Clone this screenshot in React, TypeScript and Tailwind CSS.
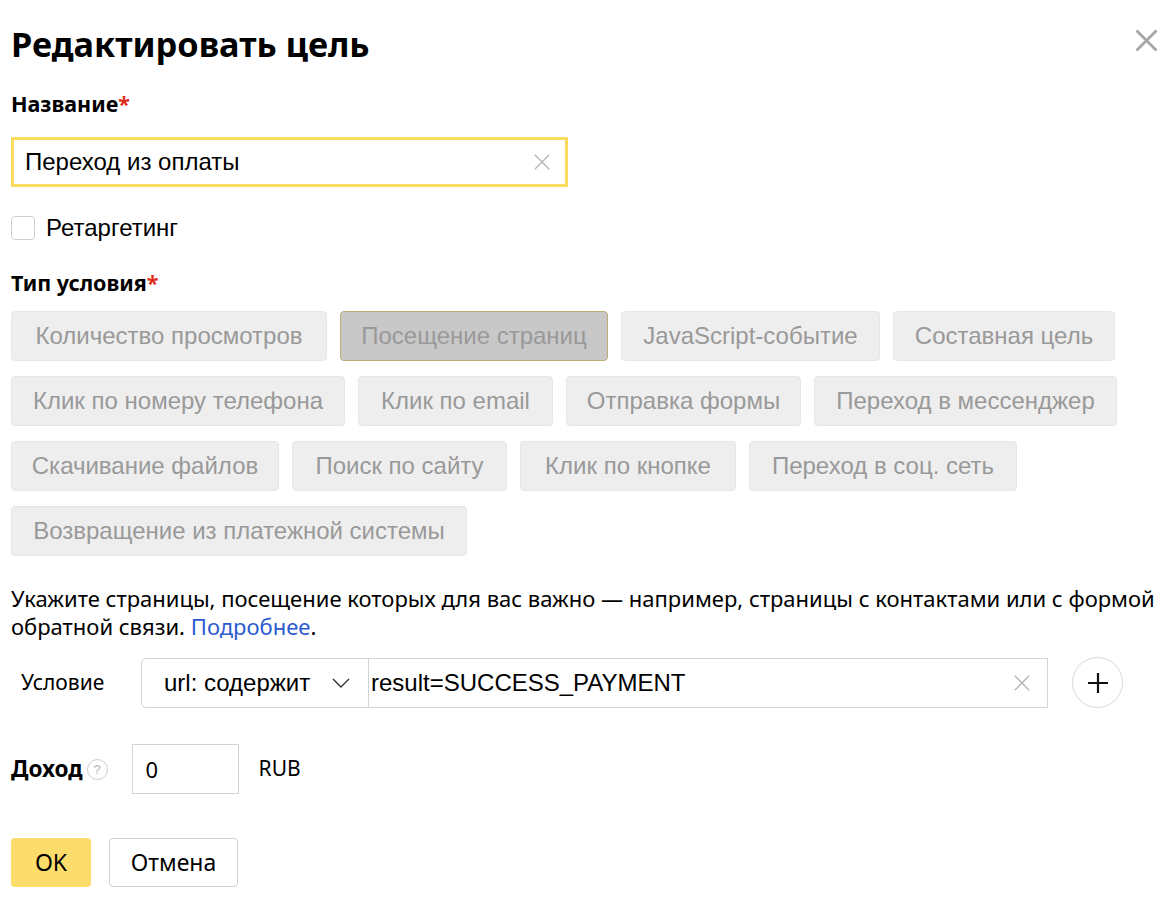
import React from 'react';

type Chip = { label: string; w: string; active?: boolean };

const rows: Chip[][] = [
  [
    { label: 'Количество просмотров', w: 'w-[316px]' },
    { label: 'Посещение страниц', w: 'w-[268px]', active: true },
    { label: 'JavaScript-событие', w: 'w-[259px]' },
    { label: 'Составная цель', w: 'w-[222px]' },
  ],
  [
    { label: 'Клик по номеру телефона', w: 'w-[334px]' },
    { label: 'Клик по email', w: 'w-[195px]' },
    { label: 'Отправка формы', w: 'w-[235px]' },
    { label: 'Переход в мессенджер', w: 'w-[303px]' },
  ],
  [
    { label: 'Скачивание файлов', w: 'w-[268px]' },
    { label: 'Поиск по сайту', w: 'w-[215px]' },
    { label: 'Клик по кнопке', w: 'w-[216px]' },
    { label: 'Переход в соц. сеть', w: 'w-[268px]' },
  ],
  [{ label: 'Возвращение из платежной системы', w: 'w-[456px]' }],
];

function ChipButton({ chip }: { chip: Chip }) {
  const base =
    'h-[50px] flex items-center justify-center rounded-[4px] border text-[24px] text-[#999999] font-["Liberation_Sans",Arial,sans-serif] ' +
    chip.w;
  return (
    <div
      className={
        chip.active
          ? base + ' bg-[#c8c8c8] border-[#b9ad78]'
          : base + ' bg-[#eeeeee] border-[#e6e6e6]'
      }
    >
      {chip.label}
    </div>
  );
}

function Cross({ size, color, stroke }: { size: number; color: string; stroke: number }) {
  return (
    <svg width={size} height={size} viewBox="0 0 20 20" fill="none">
      <path d="M2 2L18 18M18 2L2 18" stroke={color} strokeWidth={stroke} strokeLinecap="butt" />
    </svg>
  );
}

export default function App() {
  return (
    <div className="min-h-[912px] w-[1166px] bg-white text-black font-['Noto_Sans',Arial,sans-serif]">
      <div className="pl-[11px] pr-[6px] pt-[22px]">
        <div className="flex items-start justify-between">
          <h1 className="text-[34.3px] leading-[44px] font-bold">Редактировать цель</h1>
          <div className="mt-[6px] mr-[1px]">
            <Cross size={25} color="#a6a6a6" stroke={2.2} />
          </div>
        </div>

        <div className="mt-[26px] text-[21.5px] leading-[24px] font-bold">
          Название<span className="text-[#e02b1c]">*</span>
        </div>

        <div className="mt-[21px] w-[557px] h-[50px] border-[3px] border-[#fbdb5f] flex items-center justify-between pl-[11px] pr-[14px]">
          <span className="text-[24px] leading-[28px] font-['Liberation_Sans',Arial,sans-serif]">Переход из оплаты</span>
          <Cross size={18} color="#b3b3b3" stroke={1.4} />
        </div>

        <div className="mt-[29px] h-[24px] flex items-center gap-[11px]">
          <div className="w-[24px] h-[24px] rounded-[4px] border border-[#cfcfcf] bg-white" />
          <span className="text-[24px] leading-[24px] font-['Liberation_Sans',Arial,sans-serif]">Ретаргетинг</span>
        </div>

        <div className="mt-[31px] text-[21.5px] leading-[24px] font-bold">
          Тип условия<span className="text-[#e02b1c]">*</span>
        </div>

        <div className="mt-[16px] flex flex-col gap-[15px]">
          {rows.map((row, i) => (
            <div key={i} className="flex gap-[13px]">
              {row.map((c) => (
                <ChipButton key={c.label} chip={c} />
              ))}
            </div>
          ))}
        </div>

        <p className="mt-[28px] w-[1150px] text-[22px] leading-[28px]">
          Укажите страницы, посещение которых для вас важно — например, страницы с контактами или с формой обратной
          связи. <span className="text-[#2b5bd0]">Подробнее</span>.
        </p>

        <div className="mt-[17px] flex items-center">
          <span className="w-[130px] pl-[10px] text-[21px]">Условие</span>
          <div className="w-[228px] h-[50px] border border-[#d3d3d3] rounded-l-[5px] flex items-center justify-between pl-[22px] pr-[18px]">
            <span className="text-[24px] font-['Liberation_Sans',Arial,sans-serif]">url: содержит</span>
            <svg width="18" height="10" viewBox="0 0 18 10" fill="none">
              <path d="M1 1L9 9L17 1" stroke="#333" strokeWidth="1.4" />
            </svg>
          </div>
          <div className="w-[679px] h-[50px] border border-l-0 border-[#d3d3d3] flex items-center justify-between pl-[2px] pr-[16px]">
            <span className="text-[24px] font-['Liberation_Sans',Arial,sans-serif]">result=SUCCESS_PAYMENT</span>
            <Cross size={18} color="#b3b3b3" stroke={1.4} />
          </div>
          <div className="ml-[24px] w-[51px] h-[51px] rounded-full border border-[#d9d9d9] flex items-center justify-center">
            <svg width="22" height="22" viewBox="0 0 22 22" fill="none">
              <path d="M11 1V21M1 11H21" stroke="#111" strokeWidth="2.2" />
            </svg>
          </div>
        </div>

        <div className="mt-[36px] flex items-center">
          <span className="text-[22.5px] font-bold">Доход</span>
          <div className="ml-[4px] w-[21px] h-[21px] rounded-full border border-[#cccccc] flex items-center justify-center text-[13px] text-[#b3b3b3] leading-none font-['Liberation_Sans',Arial,sans-serif]">
            ?
          </div>
          <div className="ml-[24px] w-[107px] h-[50px] border border-[#d3d3d3] flex items-center pl-[13px] text-[22px]">
            0
          </div>
          <span className="ml-[20px] text-[21px]">RUB</span>
        </div>

        <div className="mt-[44px] flex gap-[18px]">
          <div className="w-[80px] h-[49px] rounded-[4px] bg-[#fcdc6a] flex items-center justify-center text-[23px]">
            OK
          </div>
          <div className="w-[129px] h-[49px] rounded-[4px] border border-[#d0d0d0] flex items-center justify-center text-[23px]">
            Отмена
          </div>
        </div>
      </div>
    </div>
  );
}
